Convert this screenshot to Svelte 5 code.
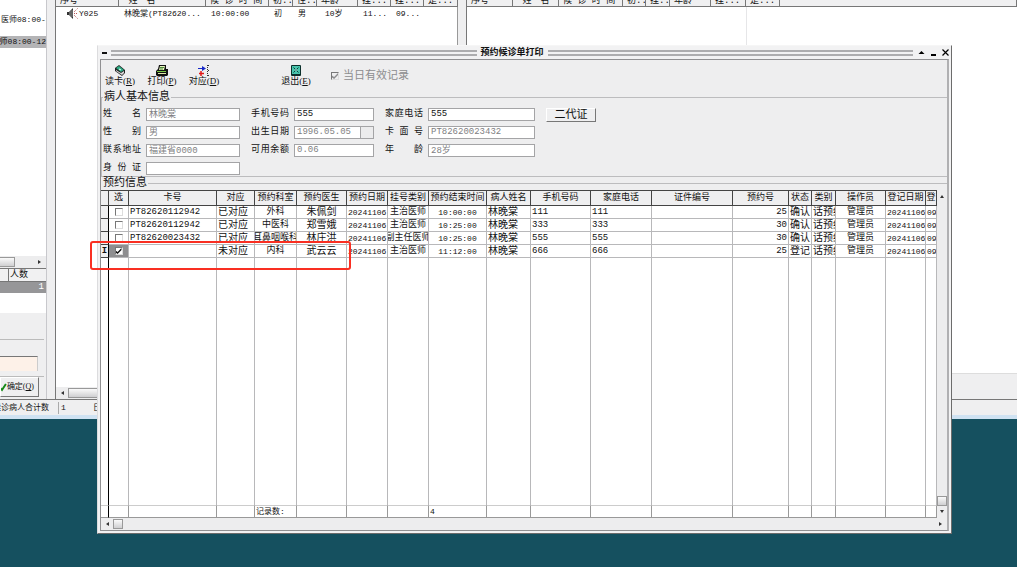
<script lang="ts">
	const waitingColumns = [
		{ label: '序号', width: 63 },
		{ label: ' 姓　名', width: 87 },
		{ label: '候 诊 时 间', width: 63 },
		{ label: '初..', width: 24 },
		{ label: '性..', width: 24 },
		{ label: '年龄', width: 41 },
		{ label: '挂...', width: 33 },
		{ label: '挂...', width: 33 },
		{ label: '是...', width: 34 },
	]

	const calledColumns = [
		{ label: '序号', width: 46 },
		{ label: ' 姓　名', width: 46 },
		{ label: '候 诊 时 间', width: 64 },
		{ label: '初..', width: 23 },
		{ label: '挂..', width: 24 },
		{ label: '年龄', width: 41 },
		{ label: '挂...', width: 35 },
		{ label: '是...', width: 34 },
	]

	// width 0 takes whatever the other columns leave
	const columns = [
		{ key: 'card', label: '卡号', width: 88, kind: 'code' },
		{ key: 'match', label: '对应', width: 38, kind: 'wide' },
		{ key: 'dept', label: '预约科室', width: 42, kind: 'center' },
		{ key: 'doctor', label: '预约医生', width: 50, kind: 'wide center' },
		{ key: 'date', label: '预约日期', width: 41, kind: 'small' },
		{ key: 'level', label: '挂号类别', width: 41, kind: 'center' },
		{ key: 'endTime', label: '预约结束时间', width: 58, kind: 'small center' },
		{ key: 'name', label: '病人姓名', width: 44, kind: 'wide' },
		{ key: 'mobile', label: '手机号码', width: 60, kind: 'code' },
		{ key: 'phone', label: '家庭电话', width: 61, kind: 'code' },
		{ key: 'idNo', label: '证件编号', width: 0, kind: 'code' },
		{ key: 'no', label: '预约号', width: 56, kind: 'code right' },
		{ key: 'status', label: '状态', width: 23, kind: 'wide' },
		{ key: 'type', label: '类别', width: 24, kind: 'wide' },
		{ key: 'operator', label: '操作员', width: 50, kind: 'center' },
		{ key: 'regDate', label: '登记日期', width: 40, kind: 'small' },
		{ key: 'regTime', label: '登', width: 11, kind: 'small' },
	]

	const common = {
		date: '20241106',
		name: '林晚棠',
		idNo: '',
		type: '话预约',
		operator: '管理员',
		regDate: '20241106',
		regTime: '09',
	}

	let bookings: Record<string, any>[] = $state([
		{ ...common, checked: false, card: 'PT82620112942', match: '已对应', dept: '外科', doctor: '朱佩剑', level: '主治医师', endTime: '10:00:00', mobile: '111', phone: '111', no: '25', status: '确认' },
		{ ...common, checked: false, card: 'PT82620112942', match: '已对应', dept: '中医科', doctor: '郑雪娥', level: '主治医师', endTime: '10:25:00', mobile: '333', phone: '333', no: '30', status: '确认' },
		{ ...common, checked: false, card: 'PT82620023432', match: '已对应', dept: '耳鼻咽喉科', doctor: '林庄洪', level: '副主任医师', endTime: '10:25:00', mobile: '555', phone: '555', no: '30', status: '确认' },
		{ ...common, checked: true, card: '', match: '未对应', dept: '内科', doctor: '武云云', level: '主治医师', endTime: '11:12:00', mobile: '666', phone: '666', no: '25', status: '登记' },
	])

	let activeRow = $state(3)
</script>

<div class="desktop">
	<main class="clinic">
		<div class="panes">
			<aside class="rooms">
				<div class="room-list">
					<div class="room">医师08:00-12</div>
					<div class="room selected">医师08:00-12</div>
				</div>
				<div class="scroll-x rooms-scroll"><i class="thumb"></i><i class="arrow right"></i></div>
				<table class="counts">
					<thead><tr><th class="stub"></th><th>人数</th></tr></thead>
					<tbody><tr><td></td><td>1</td></tr></tbody>
				</table>
				<div class="confirm">
					<hr />
					<input class="beige" aria-label="备注" />
					<hr />
					<button class="ok">
						<svg width="6" height="9" viewBox="0 0 6 9"><path d="M-2 4 L1 7 L5 1" fill="none" stroke="#178a17" stroke-width="2" /></svg>
						确定(<u>Q</u>)
					</button>
				</div>
			</aside>

			<section class="list waiting">
				<table>
					<colgroup>
						{#each waitingColumns as col}<col style="width: {col.width}px" />{/each}
					</colgroup>
					<thead>
						<tr>{#each waitingColumns as col}<th><div>{col.label}</div></th>{/each}</tr>
					</thead>
					<tbody>
						<tr>
							<td class="num">
								<svg width="12" height="11" viewBox="0 0 12 11">
									<path d="M0 4h2l4-4v11L2 7H0z" fill="#333" />
									<path d="M3 3v5M5 2v7" stroke="#999" />
									<path d="M7 4l4-4M7 5.500h4M7 7l4 4" stroke="#b55" stroke-dasharray="1 1" />
								</svg>Y025
							</td>
							<td>林晚棠(PT82620...</td>
							<td>10:00:00</td>
							<td>初</td>
							<td>男</td>
							<td class="age">10岁</td>
							<td>11...</td>
							<td>09...</td>
							<td></td>
						</tr>
					</tbody>
				</table>
				<div class="scroll-x"><i class="arrow left"></i><i class="thumb long"></i></div>
			</section>

			<section class="list called">
				<table>
					<colgroup>
						{#each calledColumns as col}<col style="width: {col.width}px" />{/each}
						<col />
					</colgroup>
					<thead>
						<tr>{#each calledColumns as col}<th><div>{col.label}</div></th>{/each}<th></th></tr>
					</thead>
				</table>
				<div class="called-rows"></div>
				<div class="empty-strip"></div>
			</section>
		</div>
		<footer class="status">
			<span class="total">候诊病人合计数</span>
			<span class="value">1</span>
			<span>日</span>
		</footer>
	</main>

	<div class="dialog" role="dialog" aria-labelledby="dialog-title">
		<header class="titlebar">
			<i class="sysmenu"></i>
			<i class="stripes"></i>
			<h1 id="dialog-title">预约候诊单打印</h1>
			<i class="stripes"></i>
			<button class="winbtn" aria-label="最大化">
				<svg width="7" height="7" viewBox="0 0 7 7"><path d="M3.5 2L6.5 5h-6z" /></svg>
			</button>
			<button class="winbtn" aria-label="最小化">
				<svg width="7" height="7" viewBox="0 0 7 7"><path d="M1 5h5v2H1z" /></svg>
			</button>
			<button class="winbtn" aria-label="关闭">
				<svg width="7" height="7" viewBox="0 0 7 7"><path d="M.5.5l6 6m0-6l-6 6" stroke="#000" stroke-width="1.2" /></svg>
			</button>
		</header>

		<div class="body">
			<div class="toolbar">
				<button class="tool">
					<svg width="12" height="11" viewBox="0 0 12 11">
						<path d="M1 3l4-3 6 5v3L8 11 1 6z" fill="#222" />
						<path d="M2 3l3-2 5 4-3 2z" fill="#2fae86" />
						<path d="M2 5l5 3 3-2v2L8 10 2 6z" fill="#d8d8d8" />
						<path d="M5 4l2 1" stroke="#fff" />
					</svg>
					<span>读卡(<u>R</u>)</span>
				</button>
				<button class="tool">
					<svg width="12" height="11" viewBox="0 0 12 11">
						<path d="M3 0h7v4h2v6l-1 1H1l-1-1V6l2-2z" fill="#111" />
						<path d="M4 1h5l-1 4H3z" fill="#e8f5c0" />
						<path d="M4 2.500h4M4 4h3" stroke="#4d8a3c" />
						<path d="M1 6h9v1H1z" fill="#7ac943" />
						<path d="M2 8h8v1H2z" fill="#dfe8a8" />
					</svg>
					<span>打印(<u>P</u>)</span>
				</button>
				<button class="tool">
					<svg width="12" height="11" viewBox="0 0 12 11">
						<path d="M0 3h4V1l4 2.500L4 6V4H0z" fill="#1527c8" />
						<path d="M3 6v5M1 8.500h5" stroke="#e01818" stroke-width="1.500" />
						<path d="M9.500 0v11M10 .5h2M10 5.500h2M10 10.500h2" stroke="#333" stroke-dasharray="1 1" />
					</svg>
					<span>对应(<u>D</u>)</span>
				</button>
				<button class="tool exit">
					<svg width="12" height="11" viewBox="0 0 12 11">
						<rect x="1" width="10" height="11" rx="1" fill="#0b2f2b" />
						<rect x="2" y="1" width="8" height="8" fill="#49c5ad" />
						<path d="M3.500 2.500l5 5m0-5l-5 5" stroke="#083f38" />
						<path d="M5 5h2" stroke="#d8fff6" />
					</svg>
					<span>退出(<u>E</u>)</span>
				</button>
				<label class="today"><input type="checkbox" checked disabled />当日有效记录</label>
			</div>

			<fieldset class="patient">
				<legend>病人基本信息</legend>
				<div class="fields">
					<label for="name" class="first">姓 名</label>
					<input id="name" value="林晚棠" readonly />
					<label for="mobile">手机号码</label>
					<input id="mobile" class="live" value="555" />
					<label for="phone">家庭电话</label>
					<input id="phone" class="live" value="555" />
					<button class="idcard">二代证</button>

					<label for="sex" class="first">性 别</label>
					<input id="sex" value="男" readonly />
					<label for="birth">出生日期</label>
					<div class="datebox">
						<input id="birth" value="1996.05.05" readonly />
						<button aria-label="选择日期"></button>
					</div>
					<label for="card">卡 面 号</label>
					<input id="card" value="PT82620023432" readonly />

					<label for="address" class="first">联系地址</label>
					<input id="address" value="福建省0000" readonly />
					<label for="balance">可用余额</label>
					<input id="balance" value="0.06" readonly />
					<label for="age">年 龄</label>
					<input id="age" value="28岁" readonly />

					<label for="idno" class="first">身 份 证</label>
					<input id="idno" value="" />
				</div>
			</fieldset>

			<fieldset class="booking">
				<legend>预约信息</legend>
				<div class="grid-frame">
					<table class="bookings">
						<colgroup>
							<col class="marker-col" />
							<col class="pick-col" />
							{#each columns as col}
								<col style={col.width ? `width: ${col.width}px` : ''} />
							{/each}
						</colgroup>
						<thead>
							<tr>
								<th class="marker"></th>
								<th>选</th>
								{#each columns as col}<th>{col.label}</th>{/each}
							</tr>
						</thead>
						<tbody>
							{#each bookings as booking, i}
								<tr class="row" onclick={() => (activeRow = i)}>
									<td class="marker">{i === activeRow ? 'I' : ''}</td>
									<td class="pick" class:active={i === activeRow}>
										<input type="checkbox" aria-label="选" bind:checked={booking.checked} />
									</td>
									{#each columns as col}
										<td class={col.kind}><div>{booking[col.key]}</div></td>
									{/each}
								</tr>
							{/each}
							<tr class="filler">
								<td class="edge"></td>
								<td></td>
								{#each columns as col}<td></td>{/each}
							</tr>
						</tbody>
						<tfoot>
							<tr>
								<td class="marker"></td>
								<td></td>
								{#each columns as col}
									<td class="sum">
										{#if col.key === 'dept'}记录数:{:else if col.key === 'endTime'}{bookings.length}{/if}
									</td>
								{/each}
							</tr>
						</tfoot>
					</table>
					<div class="scroll-y">
						<i class="arrow up"></i>
						<i class="thumb"></i>
						<i class="arrow down"></i>
					</div>
					<div class="scroll-x">
						<i class="arrow left"></i>
						<i class="thumb square"></i>
						<i class="arrow right"></i>
					</div>
				</div>
			</fieldset>
		</div>
		<div class="highlight"></div>
	</div>
</div>

<style>
	:global(body) {
		margin: 0;
	}

	.desktop {
		position: relative;
		box-sizing: border-box;
		min-height: 100vh;
		padding-bottom: 148px;
		display: flex;
		flex-direction: column;
		overflow: hidden;
		background: #15505f;
		color: #111;
		font: 9px/12px 'Liberation Mono', 'Noto Sans CJK SC', monospace;
	}

	button,
	input {
		box-sizing: border-box;
		margin: 0;
		padding: 0;
		border: 0;
		border-radius: 0;
		color: inherit;
		font: inherit;
	}

	table {
		width: 100%;
		border-collapse: separate;
		border-spacing: 0;
		table-layout: fixed;
	}

	th,
	td {
		box-sizing: border-box;
		padding: 0;
		overflow: hidden;
		white-space: nowrap;
		font-weight: 400;
	}

	/* main window behind the dialog */
	.clinic {
		flex: 1;
		display: flex;
		flex-direction: column;
		background: #efeff0;
		border-bottom: 4px solid #cfe2f2;
	}

	.panes {
		flex: 1;
		display: grid;
		grid-template-columns: 47px 403px 1fr;
		column-gap: 8px;
		border-bottom: 1px solid #777;
	}

	.rooms {
		display: flex;
		flex-direction: column;
		min-width: 0;
		border-right: 1px solid #c8c8cc;
		overflow: hidden;
	}

	.room-list {
		flex: 1;
		display: flex;
		flex-direction: column;
		gap: 10px;
		padding-top: 14px;
		background: #fff;
		font-size: 8px;
	}

	.room {
		display: flex;
		padding-left: 1px;
		overflow: hidden;
		white-space: nowrap;
	}

	.room.selected {
		justify-content: flex-end;
		background: #b4b4b6;
	}

	.counts {
		border-bottom: 20px solid #fff;
	}

	.counts th {
		height: 12px;
		padding-left: 1px;
		border: 1px solid #777;
		border-width: 1px 0 1px 1px;
		background: #f1f1f2;
		text-align: left;
	}

	.counts .stub {
		width: 8px;
		border-left: 0;
	}

	.counts td {
		height: 11px;
		padding-right: 2px;
		background: #969698;
		color: #fff;
		line-height: 11px;
		text-align: right;
	}

	.confirm {
		display: flex;
		flex-direction: column;
		padding: 26px 2px 2px 0;
	}

	.confirm hr {
		width: 100%;
		margin: 0;
		border: 0;
		border-top: 1px solid #bbb;
	}

	.beige {
		width: 38px;
		height: 15px;
		margin: 16px 0 5px;
		border-top: 1px solid #777;
		border-right: 1px solid #ccc;
		background: #fdf1e8;
	}

	.ok {
		width: 39px;
		height: 20px;
		padding-right: 4px;
		border: 1px solid;
		border-color: #fff #777 #777 #fff;
		background: #efeff0;
		font-family: 'Liberation Serif', 'Noto Sans CJK SC', serif;
		font-size: 8px;
		white-space: nowrap;
		display: flex;
		align-items: center;
		justify-content: flex-end;
	}

	.list {
		display: flex;
		flex-direction: column;
		min-width: 0;
		border-left: 1px solid #777;
		background: #fff;
		font-size: 8px;
	}

	.waiting {
		border-right: 1px solid #999;
	}

	.list th {
		height: 7px;
		border-right: 1px solid #777;
		border-bottom: 1px solid #777;
		background: #f0f0f1;
		font-size: 9px;
		line-height: 9px;
	}

	.list th div {
		height: 6px;
		display: flex;
		align-items: flex-end;
		padding-left: 4px;
		overflow: hidden;
		white-space: pre;
	}

	.list td {
		height: 14px;
		padding-left: 5px;
	}

	.list .num {
		padding-left: 11px;
	}

	.num svg {
		vertical-align: middle;
	}

	.list .age {
		padding-left: 8px;
	}

	.waiting .scroll-x {
		margin-top: auto;
	}

	.called-rows {
		flex: 1;
		width: 279px;
		border-right: 1px solid #e6e6e8;
	}

	.empty-strip {
		height: 25px;
		border-top: 1px solid #ddd;
		background: #efeff0;
	}

	.status {
		height: 15px;
		display: flex;
		align-items: center;
		font-size: 8px;
	}

	.status .total {
		width: 49px;
		display: flex;
		justify-content: flex-end;
		overflow: hidden;
		white-space: nowrap;
	}

	.status .value {
		width: 32px;
		margin-left: 9px;
		padding-left: 2px;
		border-left: 1px solid #aaa;
	}

	/* scrollbars */
	.scroll-x,
	.scroll-y {
		display: flex;
		align-items: center;
		background: #ededee;
	}

	.scroll-x {
		height: 12px;
		padding: 0 5px;
		gap: 4px;
	}

	.scroll-y {
		flex-direction: column;
		width: 10px;
		padding: 5px 0;
		gap: 4px;
	}

	.rooms-scroll {
		padding-left: 0;
	}

	.thumb {
		box-sizing: border-box;
		width: 10px;
		height: 10px;
		border: 1px solid #999;
		background: linear-gradient(#fafafa, #cfcfd1);
	}

	.rooms-scroll .thumb {
		width: 15px;
		border-left: 0;
	}

	.thumb.long {
		width: 200px;
	}

	.scroll-y .thumb {
		margin-top: auto;
	}

	.arrow {
		border: 2px solid transparent;
	}

	.arrow.left {
		border-left-width: 0;
		border-right: 3px solid #333;
	}

	.arrow.right {
		margin-left: auto;
		border-right-width: 0;
		border-left: 3px solid #333;
	}

	.arrow.up {
		border-top-width: 0;
		border-bottom: 3px solid #333;
	}

	.arrow.down {
		border-bottom-width: 0;
		border-top: 3px solid #333;
	}

	/* dialog window */
	.dialog {
		position: absolute;
		inset: 45px 65px 33px 97px;
		display: flex;
		flex-direction: column;
		padding: 0 2px 2px;
		border: 1px solid;
		border-color: #f6f6f6 #6c6c6c #6c6c6c #dcdcde;
		background: #f2f2f3;
	}

	.titlebar {
		display: flex;
		align-items: center;
		gap: 4px;
		height: 13px;
		padding-left: 2px;
	}

	.titlebar h1 {
		margin: 0;
		font-size: 9px;
		font-weight: 700;
	}

	.sysmenu {
		width: 5px;
		height: 2px;
		background: #111;
	}

	.stripes {
		flex: 1;
		height: 2px;
		border: 2px solid #adadaf;
		border-width: 2px 0;
	}

	.winbtn {
		width: 8px;
		height: 12px;
		background: none;
		line-height: 0;
	}

	.body {
		flex: 1;
		display: flex;
		flex-direction: column;
		min-height: 0;
		border: 1px solid #909092;
		border-right: 2px solid #b0b0b2;
		background: #eeeeef;
	}

	.toolbar {
		box-sizing: border-box;
		display: flex;
		align-items: center;
		height: 30px;
		gap: 12px;
		padding: 2px 0 0 4px;
	}

	.tool {
		width: 30px;
		display: flex;
		flex-direction: column;
		align-items: center;
		background: none;
		font-family: 'Liberation Serif', 'Noto Sans CJK SC', serif;
		line-height: 11px;
		white-space: nowrap;
	}

	.exit {
		margin-left: 50px;
	}

	.today {
		display: flex;
		align-items: center;
		gap: 4px;
		margin-left: 8px;
		color: #8c8c8e;
		font-size: 11px;
	}

	input[type='checkbox'] {
		appearance: none;
		flex: none;
		width: 8px;
		height: 8px;
		border: 1px solid;
		border-color: #777 #ddd #ddd #777;
		background: #fff;
	}

	input[type='checkbox']:checked::after {
		content: '';
		display: block;
		height: 6px;
		background: currentColor;
		clip-path: polygon(0 40%, 35% 65%, 100% 0, 100% 35%, 35% 100%, 0 75%);
	}

	.today input[type='checkbox'] {
		background: #eeeeef;
	}

	fieldset {
		min-width: 0;
		margin: 0;
		padding: 0;
		border: 1px solid #bcbcbe;
	}

	legend {
		padding: 0 1px;
		font-size: 11px;
		line-height: 14px;
	}

	.patient {
		padding: 4px 0 1px 1px;
		border-right: 0;
	}

	.fields {
		display: grid;
		grid-template-columns: 38px 94px 44px 80px 44px 107px 56px;
		grid-auto-rows: 13px;
		gap: 5px;
		align-items: center;
	}

	.fields label {
		padding-left: 6px;
		line-height: 13px;
		text-align-last: justify;
	}

	.fields .first {
		grid-column: 1;
		padding-left: 0;
	}

	.fields input {
		width: 100%;
		height: 13px;
		padding: 0 2px 2px;
		border: 1px solid #a4a4a6;
		background: #fff;
		color: #808082;
		line-height: 11px;
	}

	.fields .live {
		color: #111;
	}

	.datebox {
		display: flex;
	}

	.datebox input {
		flex: 1;
		min-width: 0;
	}

	.datebox button {
		width: 13px;
		border: 1px solid #a4a4a6;
		border-left: 0;
		background: #ececed;
	}

	.idcard {
		height: 14px;
		margin-left: 6px;
		border: 1px solid;
		border-color: #fff #777 #777 #fff;
		background: #efeff0;
		font-size: 11px;
		line-height: 12px;
	}

	.booking {
		flex: 1;
		display: flex;
		flex-direction: column;
		min-height: 0;
		border-width: 1px 0 0;
	}

	.booking legend {
		padding-left: 2px;
		line-height: 13px;
	}

	.grid-frame {
		flex: 1;
		display: grid;
		grid-template: 1fr 12px / 1fr 10px;
		min-height: 0;
	}

	.grid-frame .scroll-x {
		grid-column: 1 / -1;
	}

	.bookings {
		height: 100%;
		background: #fff;
	}

	.marker-col {
		width: 8px;
	}

	.pick-col {
		width: 20px;
	}

	.bookings th {
		height: 16px;
		border: 1px solid #444;
		border-width: 1px 1px 1px 0;
		background: #efeff0;
		text-align: center;
	}

	.bookings td {
		border-right: 1px solid #b8b8ba;
	}

	.bookings .row td {
		height: 13px;
		border-bottom: 1px solid #b8b8ba;
		line-height: 13px;
	}

	.bookings td.marker,
	.bookings td.edge {
		border-right-color: #000;
	}

	.bookings .row .marker {
		border-bottom-color: #444;
		background: #efeff0;
		font-weight: 700;
		line-height: 12px;
		text-align: center;
	}

	.bookings td div {
		height: 12px;
		display: flex;
		padding: 0 1px;
		overflow: hidden;
	}

	.bookings .wide {
		font-size: 10px;
	}

	.bookings .small {
		font-size: 8px;
	}

	.bookings .center div {
		justify-content: center;
		padding: 0;
	}

	.bookings .right div {
		justify-content: flex-end;
	}

	.bookings .row .pick {
		line-height: 0;
		text-align: center;
	}

	.pick.active {
		background: #8e8e90;
	}

	.pick input {
		vertical-align: middle;
	}

	.bookings tfoot td {
		height: 13px;
		border-top: 1px solid #ccc;
		border-bottom: 1px solid #999;
		border-right-color: #999;
		font-size: 8px;
		line-height: 11px;
	}

	.sum {
		padding-left: 1px;
	}

	/* red frame round the ticked booking */
	.highlight {
		position: absolute;
		top: 195px;
		left: -8px;
		width: 257px;
		height: 25px;
		border: 2px solid #f92f22;
		border-radius: 3px;
		pointer-events: none;
	}
</style>
